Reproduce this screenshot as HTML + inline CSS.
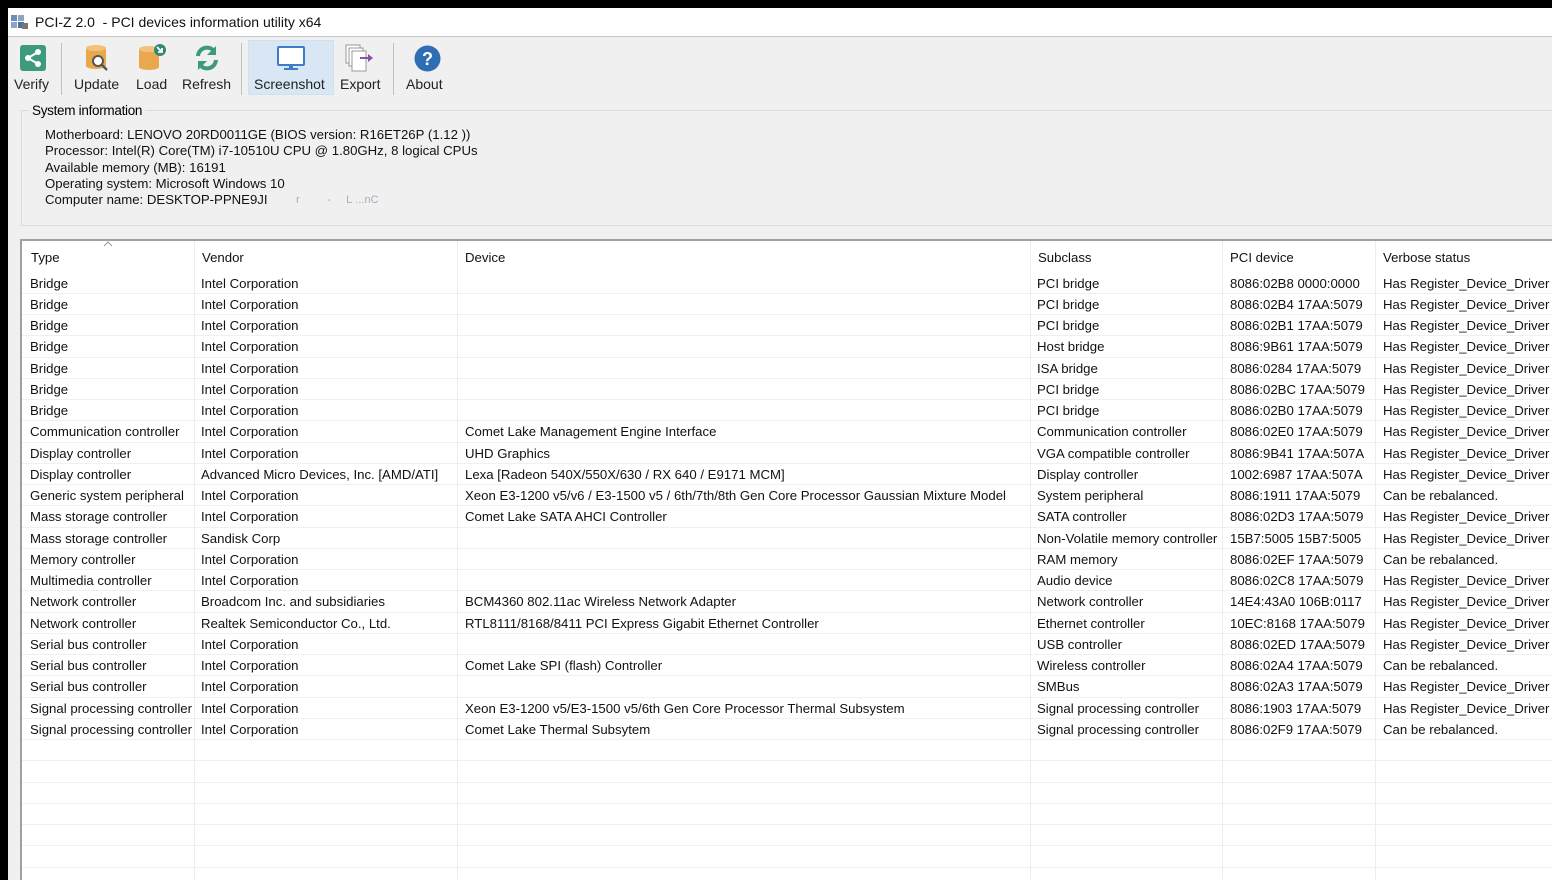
<!DOCTYPE html>
<html><head><style>
*{margin:0;padding:0;box-sizing:border-box}
html,body{width:1552px;height:880px;overflow:hidden}
body{background:#000;position:relative;font-family:"Liberation Sans",sans-serif;font-size:13px;color:#000}
.a{position:absolute;white-space:nowrap}
#win{position:absolute;left:8px;top:8px;width:1544px;height:872px;background:#f0f0f0}
.row{position:absolute;left:22px;width:1530px;height:21.25px;border-bottom:1px solid #f0f0f0}
.row span{position:absolute;top:3px;white-space:nowrap;font-size:13.2px;color:#111}
.vl{position:absolute;top:241px;height:639px;width:1px;background:#ededed}
.tb{position:absolute;top:76px;font-size:14px;color:#222}
#clip{position:absolute;left:0;top:0;width:1552px;height:880px;overflow:hidden}
</style></head><body>
<div id="clip">
<div id="win"></div>
<div class="a" style="left:8px;top:8px;width:1544px;height:29px;background:#fff;border-bottom:1px solid #c8c8c8"></div>
<svg class="a" style="left:11px;top:14px" width="18" height="16"><rect x="0" y="1" width="6" height="6" fill="#6d8fb5"/><rect x="7" y="1" width="6" height="6" fill="#8aa6c7"/><rect x="0" y="8" width="6" height="6" fill="#8aa6c7"/><rect x="7" y="8" width="6" height="6" fill="#4f6f96"/><rect x="11" y="9" width="6" height="6" fill="#777"/></svg>
<div class="a" style="left:35px;top:14px;font-size:14px;color:#111">PCI-Z 2.0&nbsp; - PCI devices information utility x64</div>
<div class="a" style="left:248px;top:40px;width:86px;height:55px;background:#d9e7f5;border:1px solid #cfe0f2"></div>
<div class="a" style="left:61px;top:43px;width:1px;height:52px;background:#c0c0c0"></div>
<div class="a" style="left:241px;top:43px;width:1px;height:52px;background:#c0c0c0"></div>
<div class="a" style="left:393px;top:43px;width:1px;height:52px;background:#c0c0c0"></div>
<svg class="a" style="left:20px;top:45px" width="26" height="26"><rect width="26" height="26" rx="3" fill="#3e9a7e"/><circle cx="18" cy="7" r="3" fill="#fff"/><circle cx="8" cy="13" r="3" fill="#fff"/><circle cx="18" cy="19" r="3" fill="#fff"/><path d="M18 7L8 13L18 19" stroke="#fff" stroke-width="2" fill="none"/></svg>
<svg class="a" style="left:84px;top:43px" width="30" height="30"><ellipse cx="12" cy="5" rx="10" ry="3" fill="#f2c27a"/><path d="M2 5v18a10 3 0 0 0 20 0V5a10 3 0 0 1-20 0z" fill="#e9a84e"/><circle cx="14" cy="18" r="5" fill="#fff" stroke="#555" stroke-width="2"/><path d="M18 22l5 5" stroke="#555" stroke-width="2.5"/></svg>
<svg class="a" style="left:137px;top:43px" width="30" height="30"><ellipse cx="12" cy="6" rx="10" ry="3" fill="#f2c27a"/><path d="M2 6v18a10 3 0 0 0 20 0V6a10 3 0 0 1-20 0z" fill="#e9a84e"/><circle cx="23" cy="7" r="6" fill="#2e8a72"/><path d="M20 4l5 5M25 5v4h-4" stroke="#fff" stroke-width="1.8" fill="none"/></svg>
<svg class="a" style="left:193px;top:44px" width="28" height="28"><path d="M5 12A9 9 0 0 1 21 7" stroke="#3e9a7e" stroke-width="4" fill="none"/><path d="M23 2v9h-9z" fill="#3e9a7e"/><path d="M23 16A9 9 0 0 1 7 21" stroke="#3e9a7e" stroke-width="4" fill="none"/><path d="M5 26v-9h9z" fill="#3e9a7e"/></svg>
<svg class="a" style="left:276px;top:46px" width="30" height="26"><rect x="2" y="1" width="26" height="18" rx="1" fill="#fff" stroke="#3d7cc9" stroke-width="2"/><rect x="13" y="19" width="4" height="3" fill="#3d7cc9"/><rect x="8" y="22" width="14" height="2" fill="#3d7cc9"/></svg>
<svg class="a" style="left:344px;top:43px" width="32" height="32"><rect x="2" y="2" width="14" height="18" fill="#fff" stroke="#999"/><rect x="5" y="5" width="14" height="18" fill="#fff" stroke="#999"/><rect x="8" y="8" width="14" height="20" fill="#fff" stroke="#999"/><path d="M16 15h10" stroke="#8a4fa8" stroke-width="2"/><path d="M24 11l5 4-5 4z" fill="#8a4fa8"/></svg>
<svg class="a" style="left:414px;top:45px" width="27" height="27"><circle cx="13.5" cy="13.5" r="13" fill="#2f6db5"/><text x="13.5" y="20" text-anchor="middle" font-family="Liberation Sans" font-weight="bold" font-size="18" fill="#fff">?</text></svg>
<div class="tb" style="left:14px">Verify</div>
<div class="tb" style="left:74px">Update</div>
<div class="tb" style="left:136px">Load</div>
<div class="tb" style="left:182px">Refresh</div>
<div class="tb" style="left:254px">Screenshot</div>
<div class="tb" style="left:340px">Export</div>
<div class="tb" style="left:406px">About</div>
<div class="a" style="left:21px;top:110px;width:1531px;height:116px;border:1px solid #dcdcdc;border-right:none"></div>
<div class="a" style="left:29px;top:103px;background:#f0f0f0;padding:0 3px;font-size:13.5px;letter-spacing:-0.3px">System information</div>
<div class="a" style="left:45px;top:127px;font-size:13.2px;line-height:16.3px;color:#111">Motherboard: LENOVO 20RD0011GE (BIOS version: R16ET26P (1.12 ))<br>Processor: Intel(R) Core(TM) i7-10510U CPU @ 1.80GHz, 8 logical CPUs<br>Available memory (MB): 16191<br>Operating system: Microsoft Windows 10<br>Computer name: DESKTOP-PPNE9JI</div>
<div class="a" style="left:296px;top:194px;font-size:11px;color:#aab">r&#160;&#160;&#160;&#160;&#160;&#160;&#160;&#160;&#160;-&#160;&#160;&#160;&#160;&#160;L&#160;...nC</div>
<div class="a" style="left:20px;top:239px;width:1532px;height:641px;background:#fff;border-top:2px solid #a0a0a0;border-left:2px solid #a0a0a0"></div>
<div class="vl" style="left:194px"></div><div class="vl" style="left:457px"></div><div class="vl" style="left:1030px"></div><div class="vl" style="left:1222px"></div><div class="vl" style="left:1375px"></div>
<svg class="a" style="left:103px;top:241px" width="10" height="6"><path d="M1 5l4-4 4 4" stroke="#999" fill="none"/></svg>
<div class="row" style="top:247px;border:none"><span style="left:9px">Type</span><span style="left:180px">Vendor</span><span style="left:443px">Device</span><span style="left:1016px">Subclass</span><span style="left:1208px">PCI device</span><span style="left:1361px">Verbose status</span></div>
<div id="rows"></div>
</div>
<script>
var d=[
["Bridge","Intel Corporation","","PCI bridge","8086:02B8 0000:0000","Has Register_Device_Driver"],
["Bridge","Intel Corporation","","PCI bridge","8086:02B4 17AA:5079","Has Register_Device_Driver"],
["Bridge","Intel Corporation","","PCI bridge","8086:02B1 17AA:5079","Has Register_Device_Driver"],
["Bridge","Intel Corporation","","Host bridge","8086:9B61 17AA:5079","Has Register_Device_Driver"],
["Bridge","Intel Corporation","","ISA bridge","8086:0284 17AA:5079","Has Register_Device_Driver"],
["Bridge","Intel Corporation","","PCI bridge","8086:02BC 17AA:5079","Has Register_Device_Driver"],
["Bridge","Intel Corporation","","PCI bridge","8086:02B0 17AA:5079","Has Register_Device_Driver"],
["Communication controller","Intel Corporation","Comet Lake Management Engine Interface","Communication controller","8086:02E0 17AA:5079","Has Register_Device_Driver"],
["Display controller","Intel Corporation","UHD Graphics","VGA compatible controller","8086:9B41 17AA:507A","Has Register_Device_Driver"],
["Display controller","Advanced Micro Devices, Inc. [AMD/ATI]","Lexa [Radeon 540X/550X/630 / RX 640 / E9171 MCM]","Display controller","1002:6987 17AA:507A","Has Register_Device_Driver"],
["Generic system peripheral","Intel Corporation","Xeon E3-1200 v5/v6 / E3-1500 v5 / 6th/7th/8th Gen Core Processor Gaussian Mixture Model","System peripheral","8086:1911 17AA:5079","Can be rebalanced."],
["Mass storage controller","Intel Corporation","Comet Lake SATA AHCI Controller","SATA controller","8086:02D3 17AA:5079","Has Register_Device_Driver"],
["Mass storage controller","Sandisk Corp","","Non-Volatile memory controller","15B7:5005 15B7:5005","Has Register_Device_Driver"],
["Memory controller","Intel Corporation","","RAM memory","8086:02EF 17AA:5079","Can be rebalanced."],
["Multimedia controller","Intel Corporation","","Audio device","8086:02C8 17AA:5079","Has Register_Device_Driver"],
["Network controller","Broadcom Inc. and subsidiaries","BCM4360 802.11ac Wireless Network Adapter","Network controller","14E4:43A0 106B:0117","Has Register_Device_Driver"],
["Network controller","Realtek Semiconductor Co., Ltd.","RTL8111/8168/8411 PCI Express Gigabit Ethernet Controller","Ethernet controller","10EC:8168 17AA:5079","Has Register_Device_Driver"],
["Serial bus controller","Intel Corporation","","USB controller","8086:02ED 17AA:5079","Has Register_Device_Driver"],
["Serial bus controller","Intel Corporation","Comet Lake SPI (flash) Controller","Wireless controller","8086:02A4 17AA:5079","Can be rebalanced."],
["Serial bus controller","Intel Corporation","","SMBus","8086:02A3 17AA:5079","Has Register_Device_Driver"],
["Signal processing controller","Intel Corporation","Xeon E3-1200 v5/E3-1500 v5/6th Gen Core Processor Thermal Subsystem","Signal processing controller","8086:1903 17AA:5079","Has Register_Device_Driver"],
["Signal processing controller","Intel Corporation","Comet Lake Thermal Subsytem","Signal processing controller","8086:02F9 17AA:5079","Can be rebalanced."]];
var xs=[8,179,443,1015,1208,1361],h="";
for(var i=0;i<29;i++){var r=d[i]||["","","","","",""];h+='<div class="row" style="top:'+(272.5+i*21.25)+'px">';for(var j=0;j<6;j++)h+='<span style="left:'+xs[j]+'px">'+r[j]+'</span>';h+='</div>';}
document.getElementById("rows").innerHTML=h;
</script>
</body></html>
